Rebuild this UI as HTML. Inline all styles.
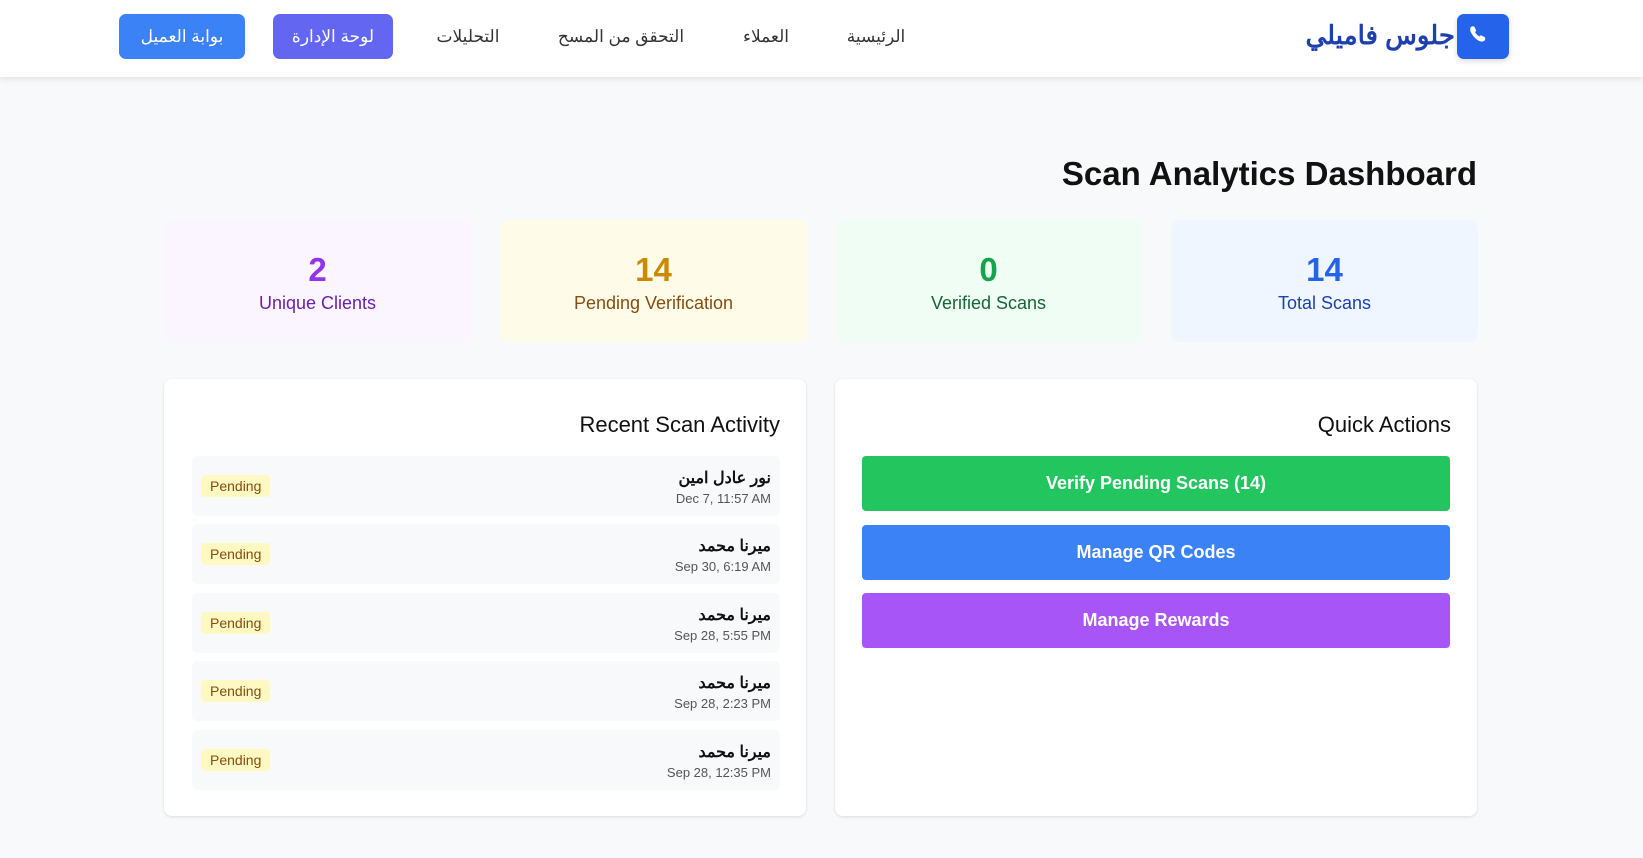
<!DOCTYPE html>
<html><head><meta charset="utf-8"><style>
*{box-sizing:border-box;margin:0;padding:0}
body{width:1643px;height:858px;background:#f8f9fb;font-family:"Liberation Sans","Noto Sans CJK SC",sans-serif;position:relative;overflow:hidden;color:#111}
.a{position:absolute}
.hdr{left:0;top:0;width:1643px;height:77px;background:#fff;box-shadow:0 2px 6px rgba(0,0,0,.1)}
.nav{top:27px;font-size:17px;color:#333;transform:translateX(-50%);white-space:nowrap}
.btn{top:14px;height:45px;border-radius:7px;color:#fff;font-size:17px;display:flex;align-items:center;justify-content:center}
.card{top:220px;width:307px;height:122px;border-radius:8px;text-align:center}
.card .n{margin-top:31px;font-size:33px;font-weight:bold;line-height:38px}
.card .l{font-size:18px;margin-top:4px}
.panel{top:379px;width:642px;height:437px;background:#fff;border-radius:8px;box-shadow:0 1px 3px rgba(0,0,0,.12)}
.ph{font-size:22px;right:26px;top:33px}
.item{left:28px;width:588px;height:60px;background:#f8f9fb;border-radius:5px}
.pend{left:9px;top:19px;background:#fef9c3;color:#854d0e;font-size:14px;padding:3px 9px;border-radius:4px}
.nm{right:9px;top:12px;font-size:16px;font-weight:bold;color:#111}
.dt{right:9px;top:35px;font-size:13px;color:#555}
.qa{left:27px;width:588px;height:55px;border-radius:4px;color:#fff;font-weight:bold;font-size:18px;display:flex;align-items:center;justify-content:center}
</style></head><body>
<div class="a hdr"></div>
<div class="a" style="left:1457px;top:14px;width:52px;height:45px;background:#2563eb;border-radius:7px;box-shadow:0 2px 6px rgba(0,0,0,.15)">
<svg width="52" height="45" viewBox="0 0 52 45"><path d="M14 13c1-1 3-1 3.5 0l1.5 3c.4 1-.3 1.6-1 2 1 2 2.5 3.5 4.5 4.5.4-.7 1-1.4 2-1l3 1.5c1 .5 1 2.5 0 3.5-1.5 1.5-4 1.5-7-.5-3-2-5-4.5-6.5-7.5-1.2-2.5-1-4.5 0-5.5z" fill="#fff"/></svg></div>
<div class="a" style="right:188px;top:20px;font-size:26px;font-weight:bold;color:#1e40af">جلوس فاميلي</div>
<div class="a nav" style="left:876px">الرئيسية</div>
<div class="a nav" style="left:766px">العملاء</div>
<div class="a nav" style="left:621px">التحقق من المسح</div>
<div class="a nav" style="left:468px">التحليلات</div>
<div class="a btn" style="left:273px;width:120px;background:#6366f1">لوحة الإدارة</div>
<div class="a btn" style="left:119px;width:126px;background:#3b82f6">بوابة العميل</div>
<div class="a" style="right:166px;top:155px;font-size:33px;font-weight:bold">Scan Analytics Dashboard</div>
<div class="a card" style="left:164px;background:#faf5ff"><div class="n" style="color:#9333ea">2</div><div class="l" style="color:#6b21a8">Unique Clients</div></div>
<div class="a card" style="left:500px;background:#fefce8"><div class="n" style="color:#ca8a04">14</div><div class="l" style="color:#854d0e">Pending Verification</div></div>
<div class="a card" style="left:835px;background:#f0fdf4"><div class="n" style="color:#16a34a">0</div><div class="l" style="color:#166534">Verified Scans</div></div>
<div class="a card" style="left:1171px;background:#eff6ff"><div class="n" style="color:#2563eb">14</div><div class="l" style="color:#1e40af">Total Scans</div></div>
<div class="a panel" style="left:164px">
<div class="a ph">Recent Scan Activity</div>
<div class="a item" style="top:77px"><span class="a pend">Pending</span><span class="a nm">نور عادل امين</span><span class="a dt">Dec 7, 11:57 AM</span></div>
<div class="a item" style="top:145px"><span class="a pend">Pending</span><span class="a nm">ميرنا محمد</span><span class="a dt">Sep 30, 6:19 AM</span></div>
<div class="a item" style="top:214px"><span class="a pend">Pending</span><span class="a nm">ميرنا محمد</span><span class="a dt">Sep 28, 5:55 PM</span></div>
<div class="a item" style="top:282px"><span class="a pend">Pending</span><span class="a nm">ميرنا محمد</span><span class="a dt">Sep 28, 2:23 PM</span></div>
<div class="a item" style="top:351px"><span class="a pend">Pending</span><span class="a nm">ميرنا محمد</span><span class="a dt">Sep 28, 12:35 PM</span></div>
</div>
<div class="a panel" style="left:835px">
<div class="a ph">Quick Actions</div>
<div class="a qa" style="top:77px;background:#22c55e">Verify Pending Scans (14)</div>
<div class="a qa" style="top:146px;background:#3b82f6">Manage QR Codes</div>
<div class="a qa" style="top:214px;background:#a855f7">Manage Rewards</div>
</div>
</body></html>
